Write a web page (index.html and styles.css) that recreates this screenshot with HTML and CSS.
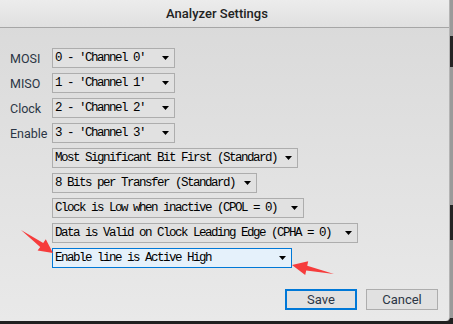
FILE: index.html
```html
<!DOCTYPE html>
<html lang="en">
<head>
  <meta charset="UTF-8">
  <title>Analyzer Settings</title>
  <meta name="viewport" content="width=device-width, initial-scale=1.0">
  <link rel="stylesheet" href="styles.css">
</head>
<body>
  <div class="dialog">
    <div class="titlebar">Analyzer Settings</div>
    <div class="content">
      <div class="rows">
        <span class="label">MOSI</span>
        <div class="combo w-chan"><span class="val">0 - 'Channel 0'</span><svg class="arr" width="7" height="4"><polygon points="0,0 7,0 3.5,4"/></svg></div>

        <span class="label">MISO</span>
        <div class="combo w-chan"><span class="val">1 - 'Channel 1'</span><svg class="arr" width="7" height="4"><polygon points="0,0 7,0 3.5,4"/></svg></div>

        <span class="label">Clock</span>
        <div class="combo w-chan"><span class="val">2 - 'Channel 2'</span><svg class="arr" width="7" height="4"><polygon points="0,0 7,0 3.5,4"/></svg></div>

        <span class="label">Enable</span>
        <div class="combo w-chan"><span class="val">3 - 'Channel 3'</span><svg class="arr" width="7" height="4"><polygon points="0,0 7,0 3.5,4"/></svg></div>

        <span class="label"></span>
        <div class="combo w-order"><span class="val">Most Significant Bit First (Standard)</span><svg class="arr" width="7" height="4"><polygon points="0,0 7,0 3.5,4"/></svg></div>

        <span class="label"></span>
        <div class="combo w-bits"><span class="val">8 Bits per Transfer (Standard)</span><svg class="arr" width="7" height="4"><polygon points="0,0 7,0 3.5,4"/></svg></div>

        <span class="label"></span>
        <div class="combo w-cpol"><span class="val">Clock is Low when inactive (CPOL = 0)</span><svg class="arr" width="7" height="4"><polygon points="0,0 7,0 3.5,4"/></svg></div>

        <span class="label"></span>
        <div class="combo w-cpha"><span class="val">Data is Valid on Clock Leading Edge (CPHA = 0)</span><svg class="arr" width="7" height="4"><polygon points="0,0 7,0 3.5,4"/></svg></div>

        <span class="label"></span>
        <div class="combo w-enable focused"><span class="val">Enable line is Active High</span><svg class="arr" width="7" height="4"><polygon points="0,0 7,0 3.5,4"/></svg></div>
      </div>

      <div class="buttons">
        <button class="btn default">Save</button>
        <button class="btn">Cancel</button>
      </div>
    </div>
  </div>

  <!-- red annotation arrows -->
  <svg class="marks" width="453" height="324">
    <polygon points="21,230 43.2,242.9 45.8,239.2 53,253 37.6,250.6 40.2,246.9"/>
    <polygon points="334,274 307.2,265.7 308.2,261.3 292,265 305.2,274.9 306.2,270.5"/>
  </svg>
</body>
</html>
```

FILE: styles.css
```css
body { margin: 0; width: 453px; height: 324px; overflow: hidden; position: relative;
  background: linear-gradient(to bottom, #9a9a9a 0 36px, #242424 36px 67px, #9a9a9a 67px 205px, #242424 205px 240px, #9a9a9a 240px 318px, #202020 318px);
  font-family: Roboto, "Liberation Sans", sans-serif; }

.dialog { width: 449px; height: 321px; border-right: 1px solid #b4b4b4; border-radius: 0 0 4px 0;
  background: linear-gradient(to bottom, #d9d9d9, #e9e9e9); overflow: hidden; }
.titlebar { height: 27px; line-height: 27px; border-bottom: 1px solid #a6a6a6; padding-right: 15px;
  background: linear-gradient(to bottom, #ececec, #e0e0e0); text-align: center;
  font-size: 13px; font-weight: 500; color: #222; }

.content { padding: 20px 10px 0 10px; }
.rows { display: grid; grid-template-columns: 42px auto; row-gap: 5px; justify-items: start; align-items: center; }
.label { font-size: 12.5px; color: #2b3645; }

.combo { height: 20px; box-sizing: border-box; display: flex; align-items: center; padding: 0 5px 0 2px;
  border: 1px solid #adadad; background: #e1e1e1; }
.combo .val { flex: 1; white-space: nowrap; font-family: "Liberation Mono", monospace; font-size: 12.5px;
  letter-spacing: -1.5px; color: #000; }
.combo .arr { fill: #000; }
.combo.focused { border-color: #0078d7; background: #e5f1fb; }

.w-chan { width: 123px; }
.w-order { width: 246px; }
.w-bits { width: 205px; }
.w-cpol { width: 252px; }
.w-cpha { width: 306px; }
.w-enable { width: 240px; }

.buttons { display: flex; justify-content: flex-end; gap: 9px; margin-top: 21px; padding-right: 1px; }
.btn { width: 72px; height: 21px; box-sizing: border-box; border: 1px solid #adadad; background: #e1e1e1;
  font-family: Roboto, "Liberation Sans", sans-serif; font-size: 13px; color: #2b3645; padding: 0; }
.btn.default { border: 2px solid #0078d7; }

.marks { position: absolute; top: 0; left: 0; pointer-events: none; }
.marks polygon { fill: #f63c3c; }
```
